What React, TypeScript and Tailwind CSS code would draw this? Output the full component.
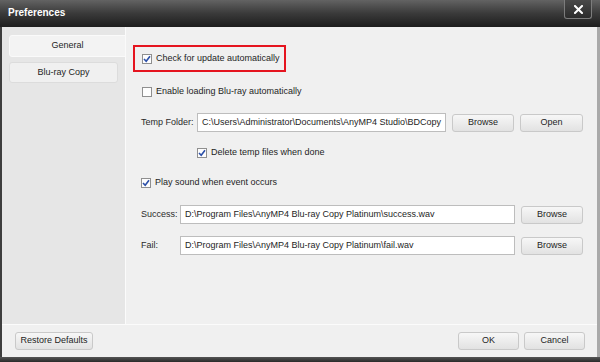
import React from "react";

const font = { fontFamily: '"Liberation Sans", Arial, sans-serif' };

function Check({ checked }: { checked?: boolean }) {
  return (
    <div className="w-[10px] h-[10px] border border-[#8f8f8f] bg-[#fdfdfd] flex items-center justify-center shrink-0">
      {checked && (
        <svg width="8" height="8" viewBox="0 0 8 8">
          <path d="M1 4 L3.2 6.3 L7 1.2" stroke="#2b4fa8" strokeWidth="1.6" fill="none" />
        </svg>
      )}
    </div>
  );
}

function Btn({ children, w }: { children: React.ReactNode; w: string }) {
  return (
    <div
      className={`${w} h-[18px] shrink-0 rounded-[3px] border border-[#c9c9c9] bg-gradient-to-b from-[#f7f7f7] to-[#e2e2e2] flex items-center justify-center text-[9px] text-[#1e1e1e]`}
    >
      {children}
    </div>
  );
}

function Field({ w, value }: { w: string; value: string }) {
  return (
    <div className={`${w} h-[19px] shrink-0 border border-[#bdbdbd] bg-white flex items-center pl-[4px] text-[9px] text-[#1e1e1e] whitespace-nowrap overflow-hidden`}>
      {value}
    </div>
  );
}

export default function App() {
  return (
    <div className="w-[600px] h-[362px] flex flex-col bg-[#f0f0f0] overflow-hidden" style={font}>
      {/* Title bar */}
      <div className="h-[27px] shrink-0 flex items-start bg-gradient-to-b from-[#636363] via-[#3a3a3a] to-[#1e1e1e]">
        <div className="pl-[8px] pt-[7px] text-[10px] font-bold text-white leading-[12px]">Preferences</div>
        <div className="flex-1" />
        <div className="mr-[8px] w-[28px] h-[19px] rounded-b-[3px] border border-t-0 border-[#7c7c7c] bg-gradient-to-b from-[#4a4a4a] to-[#2c2c2c] flex items-center justify-center">
          <svg width="9" height="9" viewBox="0 0 9 9">
            <path d="M1 1 L8 8 M8 1 L1 8" stroke="#ffffff" strokeWidth="2" strokeLinecap="square" />
          </svg>
        </div>
      </div>

      {/* Body */}
      <div className="flex-1 flex flex-col border-l-2 border-l-[#3e3e3e] border-r-[3px] border-r-[#a9a9a9]">
        <div className="flex-1 flex">
          {/* Sidebar */}
          <div className="w-[124px] shrink-0 bg-[#e6e6e6] border-r border-r-[#fbfbfb] pl-[7px] pt-[8px] flex flex-col">
            <div className="h-[22px] ml-0 mr-[-1px] bg-[#f3f3f3] border border-[#fafafa] rounded-l-[3px] flex items-center justify-center text-[9px] text-[#1e1e1e]">
              General
            </div>
            <div className="mt-[5px] h-[21px] w-[109px] bg-[#f0f0f0] border border-[#dcdcdc] rounded-[3px] flex items-center justify-center text-[9px] text-[#1e1e1e]">
              Blu-ray Copy
            </div>
          </div>

          {/* Content */}
          <div className="flex-1 flex flex-col pt-[18px] text-[9px] text-[#1e1e1e]">
            <div className="ml-[7px] w-[153px] h-[27px] border-2 border-[#e5141f] flex items-center pl-[7px] gap-[4px]">
              <Check checked />
              <span>Check for update automatically</span>
            </div>

            <div className="mt-[13px] ml-[16px] h-[14px] flex items-center gap-[4px]">
              <Check />
              <span>Enable loading Blu-ray automatically</span>
            </div>

            <div className="mt-[14px] ml-[15px] flex items-center">
              <span className="w-[56px] shrink-0 text-[#2a2a2a]">Temp Folder:</span>
              <Field w="w-[249px]" value={"C:\\Users\\Administrator\\Documents\\AnyMP4 Studio\\BDCopy"} />
              <div className="ml-[6px]">
                <Btn w="w-[62px]">Browse</Btn>
              </div>
              <div className="ml-[6px]">
                <Btn w="w-[63px]">Open</Btn>
              </div>
            </div>

            <div className="mt-[14px] ml-[71px] h-[14px] flex items-center gap-[4px]">
              <Check checked />
              <span>Delete temp files when done</span>
            </div>

            <div className="mt-[16px] ml-[15px] h-[14px] flex items-center gap-[4px]">
              <Check checked />
              <span>Play sound when event occurs</span>
            </div>

            <div className="mt-[15px] ml-[15px] flex items-center">
              <span className="w-[39px] shrink-0 text-[#2a2a2a]">Success:</span>
              <Field w="w-[335px]" value={"D:\\Program Files\\AnyMP4 Blu-ray Copy Platinum\\success.wav"} />
              <div className="ml-[6px]">
                <Btn w="w-[62px]">Browse</Btn>
              </div>
            </div>

            <div className="mt-[12px] ml-[15px] flex items-center">
              <span className="w-[39px] shrink-0 text-[#2a2a2a]">Fail:</span>
              <Field w="w-[335px]" value={"D:\\Program Files\\AnyMP4 Blu-ray Copy Platinum\\fail.wav"} />
              <div className="ml-[6px]">
                <Btn w="w-[62px]">Browse</Btn>
              </div>
            </div>
          </div>
        </div>

        {/* Footer */}
        <div className="h-[33px] shrink-0 border-t border-t-[#fbfbfb] bg-[#f0f0f0] flex items-start pt-[7px] pl-[13px] pr-[12px]">
          <Btn w="w-[78px]">Restore Defaults</Btn>
          <div className="flex-1" />
          <Btn w="w-[61px]">OK</Btn>
          <div className="ml-[5px]">
            <Btn w="w-[61px]">Cancel</Btn>
          </div>
        </div>
      </div>

      {/* Bottom frame */}
      <div className="h-[5px] shrink-0 bg-gradient-to-b from-[#555555] to-[#2a2a2a]" />
    </div>
  );
}
